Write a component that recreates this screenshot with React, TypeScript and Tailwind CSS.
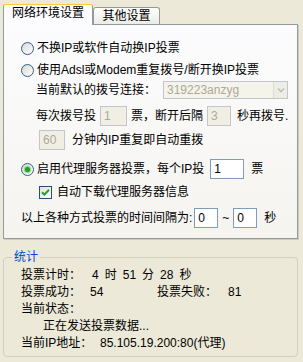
import clsx from 'clsx';

function Radio({ checked }: { checked?: boolean }) {
  return (
    <span className="flex h-[13px] w-[13px] shrink-0 items-center justify-center rounded-full border border-[#2c5f8e] bg-gradient-to-br from-[#d8d8d2] to-white">
      {checked && <span className="h-[5px] w-[5px] rounded-full bg-[#21a121] shadow-[0_0_1px_1px_#7fd07f]" />}
    </span>
  );
}

function Check() {
  return (
    <span className="flex h-[13px] w-[13px] shrink-0 items-center justify-center border border-[#1c5180] bg-gradient-to-br from-[#e0e0da] to-white">
      <svg width="9" height="9" viewBox="0 0 9 9">
        <path d="M1 4.2 L3.4 6.6 L8 1.8" fill="none" stroke="#21a121" strokeWidth="2" />
      </svg>
    </span>
  );
}

function Field({ value, width, disabled }: { value: string; width: string; disabled?: boolean }) {
  return (
    <span
      className={clsx(
        'flex h-[20px] shrink-0 items-center border px-[3px] leading-none',
        width,
        disabled ? 'border-[#c2c6cc] bg-[#f1efe4] text-[#aca899]' : 'border-[#7f9db9] bg-white text-black',
      )}
    >
      {value}
    </span>
  );
}

export default function App() {
  return (
    <div className="h-[362px] w-[303px] overflow-hidden bg-[#ece9d8] pl-[3px] pt-[4px] font-['SimSun','Liberation_Sans','Noto_Sans_CJK_SC',sans-serif] text-[12px] leading-[17px] text-black">
      {/* Tabs */}
      <div className="flex h-[20px] items-end">
        <div className="relative z-10 -mb-px flex h-[21px] w-[90px] flex-col rounded-t-[3px] border-x border-[#919b9c] bg-[#fcfcfe]">
          <div className="h-px rounded-t-[3px] bg-[#e68b2c]" />
          <div className="h-[2px] bg-[#ffc73c]" />
          <div className="flex flex-1 items-center justify-center pb-[3px]">网络环境设置</div>
        </div>
        <div className="flex h-[17px] w-[67px] items-center justify-center rounded-t-[3px] border border-b-0 border-[#919b9c] bg-gradient-to-b from-white to-[#ecebe5]">
          其他设置
        </div>
      </div>

      {/* Tab panel */}
      <div className="flex h-[215px] w-[295px] flex-col border border-[#919b9c] bg-gradient-to-b from-[#fcfcfe] to-[#f5f4ef] shadow-[1px_1px_0_#cfccbd]">
        <div className="mt-[13px] flex h-[20px] items-center gap-[3px] pl-[17px]">
          <Radio />
          <span>不换IP或软件自动换IP投票</span>
        </div>
        <div className="mt-[2px] flex h-[20px] items-center gap-[3px] pl-[17px]">
          <Radio />
          <span>使用Adsl或Modem重复拨号/断开换IP投票</span>
        </div>
        <div className="flex h-[20px] items-center pl-[32px]">
          <span>当前默认的拨号连接：</span>
          <span className="ml-[7px] flex h-[18px] w-[125px] items-center border border-[#c2c6cc] bg-[#f5f4ea] pl-[3px] text-[#aca899]">
            <span className="flex-1">319223anzyg</span>
            <span className="flex h-[16px] w-[14px] items-center justify-center border-l border-[#dedcd2] bg-[#eeede5]">
              <svg width="8" height="6" viewBox="0 0 8 6">
                <path d="M1 1.5 L4 4.5 L7 1.5" fill="none" stroke="#c2c0b4" strokeWidth="1.6" />
              </svg>
            </span>
          </span>
        </div>
        <div className="mt-[6px] flex h-[20px] items-center pl-[32px]">
          <span>每次拨号投</span>
          <span className="ml-[4px]"><Field value="1" width="w-[27px]" disabled /></span>
          <span className="ml-[4px]">票，断开后隔</span>
          <span className="ml-[4px]"><Field value="3" width="w-[24px]" disabled /></span>
          <span className="ml-[6px]">秒再拨号.</span>
        </div>
        <div className="mt-[4px] flex h-[20px] items-center pl-[35px]">
          <Field value="60" width="w-[26px]" disabled />
          <span className="ml-[7px]">分钟内IP重复即自动重拨</span>
        </div>
        <div className="mt-[9px] flex h-[20px] items-center pl-[17px]">
          <Radio checked />
          <span className="ml-[3px]">启用代理服务器投票，每个IP投</span>
          <span className="ml-[6px]"><Field value="1" width="w-[34px]" /></span>
          <span className="ml-[7px]">票</span>
        </div>
        <div className="mt-[3px] flex h-[20px] items-center gap-[5px] pl-[35px]">
          <Check />
          <span>自动下载代理服务器信息</span>
        </div>
        <div className="mt-[6px] flex h-[20px] items-center pl-[17px]">
          <span>以上各种方式投票的时间间隔为:</span>
          <span className="ml-[2px]"><Field value="0" width="w-[24px]" /></span>
          <span className="ml-[4px]">~</span>
          <span className="ml-[4px]"><Field value="0" width="w-[24px]" /></span>
          <span className="ml-[7px]">秒</span>
        </div>
      </div>

      {/* Statistics group */}
      <fieldset className="mt-[10px] w-[295px] rounded-[4px] border border-[#d0d0bf] pb-[4px] pl-[17px] pt-[1px]">
        <legend className="-ml-[9px] px-[2px] text-[#0046d5]">统计</legend>
        <div className="flex">
          <span className="w-[71px]">投票计时：</span>
          <span className="flex gap-[6px]">
            <span>4</span>
            <span>时</span>
            <span>51</span>
            <span>分</span>
            <span>28</span>
            <span>秒</span>
          </span>
        </div>
        <div className="flex">
          <span className="w-[69px]">投票成功：</span>
          <span className="w-[67px]">54</span>
          <span className="w-[71px]">投票失败：</span>
          <span>81</span>
        </div>
        <div>当前状态：</div>
        <div className="pl-[22px]">正在发送投票数据...</div>
        <div className="flex">
          <span className="w-[79px]">当前IP地址：</span>
          <span>85.105.19.200:80(代理)</span>
        </div>
      </fieldset>
    </div>
  );
}
